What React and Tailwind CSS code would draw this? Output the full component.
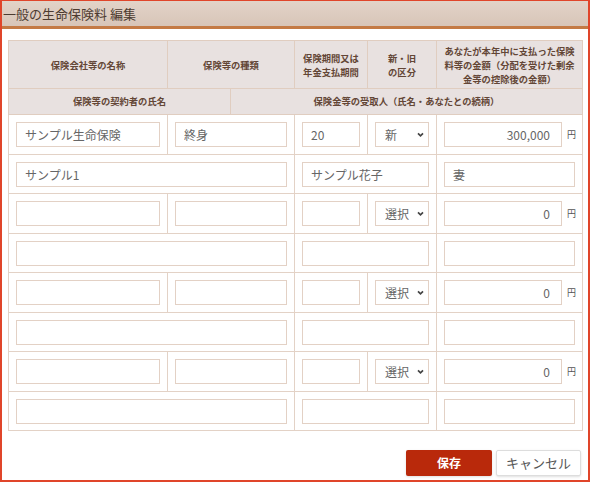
import { useState } from "react";

const font = { fontFamily: '"Noto Sans CJK JP", "Noto Sans", sans-serif' };

const Chevron = () => (
  <svg width="7" height="6" viewBox="0 0 7 6" className="absolute right-[5px] top-[10px] pointer-events-none">
    <path d="M1 1.3 L3.5 3.8 L6 1.3" fill="none" stroke="#444" strokeWidth="1.7" />
  </svg>
);

const inputCls =
  "block w-full h-[25px] border border-[#e3d1c5] bg-white px-[8px] text-[12px] text-[#666] outline-none";

const Field = ({ value = "", right }) => (
  <input
    readOnly
    value={value}
    className={inputCls + (right ? " text-right pr-[11px]" : "")}
    style={font}
  />
);

const Select = ({ value }) => (
  <div className="relative">
    <select
      value={value}
      onChange={() => {}}
      className="block w-full h-[25px] appearance-none border border-[#e3d1c5] bg-white pl-[9px] text-[12px] text-[#666] outline-none"
      style={font}
    >
      <option value="選択">選択</option>
      <option value="新">新</option>
      <option value="旧">旧</option>
    </select>
    <Chevron />
  </div>
);

const Amount = ({ value }) => (
  <div className="flex items-center gap-[5px]">
    <div className="flex-1">
      <Field value={value} right />
    </div>
    <span className="text-[9px] text-[#555] w-[8px]">円</span>
  </div>
);

const td = "border border-[#e3d2c6] px-[7px] align-middle";
const th = "border border-[#e0cdc0] bg-[#e8e1e0] text-[9.3px] font-bold text-[#634636] text-center align-middle leading-[14px]";

const rows = [
  { name: "サンプル生命保険", kind: "終身", term: "20", sel: "新", amt: "300,000", holder: "サンプル1", recv: "サンプル花子", rel: "妻" },
  { name: "", kind: "", term: "", sel: "選択", amt: "0", holder: "", recv: "", rel: "" },
  { name: "", kind: "", term: "", sel: "選択", amt: "0", holder: "", recv: "", rel: "" },
  { name: "", kind: "", term: "", sel: "選択", amt: "0", holder: "", recv: "", rel: "" },
];

export default function App() {
  const [data] = useState(rows);
  return (
    <div className="w-[590px] h-[482px] bg-white border-x-2 border-b-2 border-t border-[#e0452a] flex flex-col" style={font}>
      <div className="h-[28px] shrink-0 bg-gradient-to-b from-[#e2d3c8] to-[#d8c5b8] border-b-[3px] border-[#c47a45] flex items-center pl-[1px]">
        <span className="text-[13px] text-[#4d3b30]">一般の生命保険料 編集</span>
      </div>
      <div className="px-[6px] pt-[11px]">
        <table className="w-[574px] border-collapse table-fixed">
          <colgroup>
            <col className="w-[159px]" />
            <col className="w-[127px]" />
            <col className="w-[73px]" />
            <col className="w-[69px]" />
            <col className="w-[146px]" />
          </colgroup>
          <thead>
            <tr className="h-[48px]">
              <th className={th}>保険会社等の名称</th>
              <th className={th}>保険等の種類</th>
              <th className={th}>保険期間又は<br />年金支払期間</th>
              <th className={th}>新・旧<br />の区分</th>
              <th className={th + " px-[6px]"}>あなたが本年中に支払った保険<br />料等の金額（分配を受けた剰余<br />金等の控除後の金額）</th>
            </tr>
            <tr className="h-[26px]">
              <th colSpan={5} className="border border-[#e0cdc0] bg-[#e8e1e0] p-0">
                <div className="flex h-[25px] text-[9.3px] font-bold text-[#634636]">
                  <div className="w-[222px] flex items-center justify-center border-r border-[#e0cdc0]">保険等の契約者の氏名</div>
                  <div className="flex-1 flex items-center justify-center">保険金等の受取人（氏名・あなたとの続柄）</div>
                </div>
              </th>
            </tr>
          </thead>
          <tbody>
            {data.map((r, i) => (
              <>
                <tr key={"a" + i} className="h-[40px]">
                  <td className={td}><Field value={r.name} /></td>
                  <td className={td}><Field value={r.kind} /></td>
                  <td className={td}><Field value={r.term} /></td>
                  <td className={td}><Select value={r.sel} /></td>
                  <td className={td}><Amount value={r.amt} /></td>
                </tr>
                <tr key={"b" + i} className="h-[39px]">
                  <td colSpan={2} className={td}><Field value={r.holder} /></td>
                  <td colSpan={2} className={td}><Field value={r.recv} /></td>
                  <td className={td}><Field value={r.rel} /></td>
                </tr>
              </>
            ))}
          </tbody>
        </table>
        <div className="flex justify-end gap-[4px] mt-[19px] pr-[1px]">
          <button className="w-[86px] h-[26px] rounded-[2px] bg-[#b9290b] text-white text-[12px] font-bold shadow-sm">保存</button>
          <button className="w-[85px] h-[26px] rounded-[2px] bg-white border border-[#ddd] text-[#555] text-[13px] shadow-sm">キャンセル</button>
        </div>
      </div>
    </div>
  );
}
